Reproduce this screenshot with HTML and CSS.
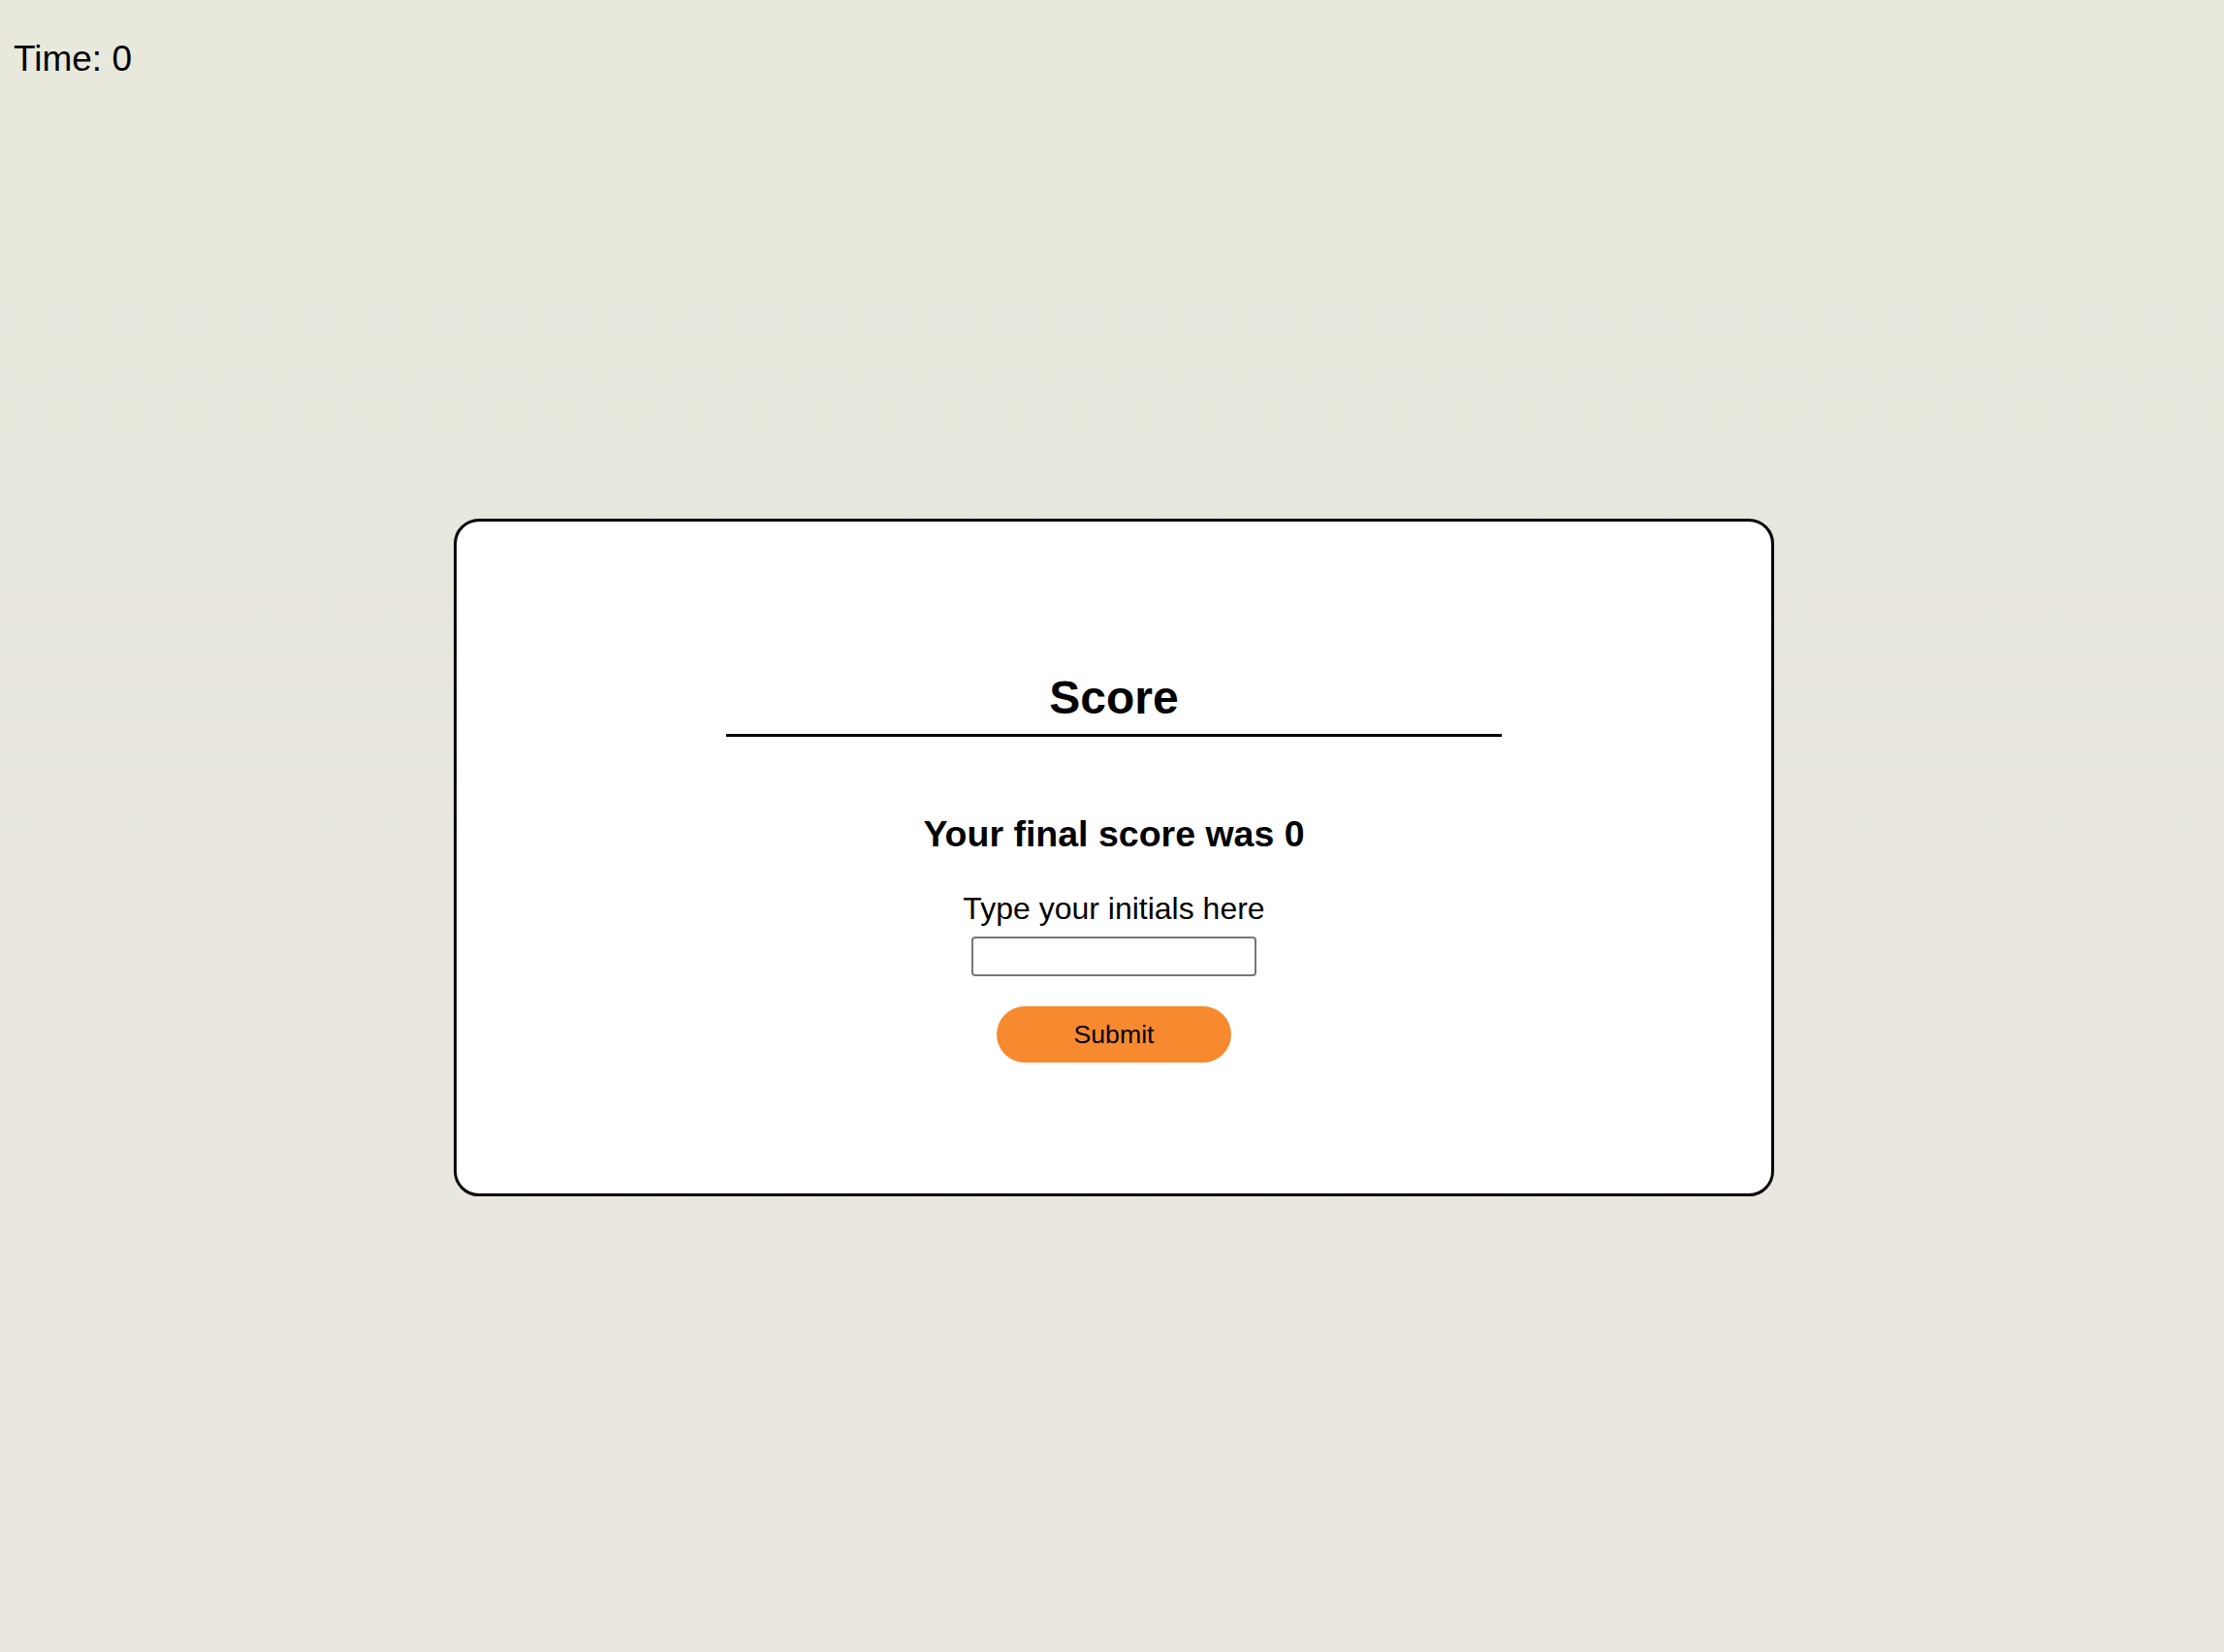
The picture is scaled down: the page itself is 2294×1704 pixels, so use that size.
FILE: index.html
```html
<!DOCTYPE html>
<html lang="en">
<head>
<meta charset="utf-8">
<title>Quiz - Score</title>
<link rel="stylesheet" href="styles.css">
</head>
<body>
<header class="topbar">
  <div class="timer">Time: 0</div>
</header>
<main class="stage">
  <section class="card">
    <h1 class="card-title">Score</h1>
    <p class="final">Your final score was 0</p>
    <label class="initials-label" for="initials">Type your initials here</label>
    <input class="initials-input" id="initials" type="text">
    <button class="submit-btn" type="button">Submit</button>
  </section>
</main>
</body>
</html>
```
FILE: styles.css
```css
html, body {
  margin: 0;
  padding: 0;
}

body {
  min-height: 1704px;
  background: linear-gradient(to bottom, #e8e8dc 0%, #e9e7df 60%, #eae7e1 100%);
  font-family: "Liberation Sans", Arial, Helvetica, sans-serif;
  color: #000;
}

.topbar {
  padding: 40px 0 0 14px;
}

.timer {
  font-size: 37px;
  line-height: 42px;
}

.stage {
  display: flex;
  justify-content: center;
  padding: 453px 0 0 4px;
}

.card {
  box-sizing: border-box;
  width: 1362px;
  height: 699px;
  background: #fff;
  border: 3px solid #000;
  border-radius: 26px;
  display: flex;
  flex-direction: column;
  align-items: center;
  padding-top: 154px;
}

.card-title {
  width: 800px;
  margin: 0;
  padding-bottom: 10px;
  border-bottom: 3px solid #000;
  text-align: center;
  font-size: 48px;
  line-height: 55px;
  font-weight: 700;
}

.final {
  margin: 79px 0 0;
  font-size: 37.5px;
  line-height: 42px;
  font-weight: 700;
}

.initials-label {
  margin-top: 38px;
  font-size: 32px;
  line-height: 37px;
}

.initials-input {
  box-sizing: border-box;
  margin-top: 10px;
  width: 294px;
  height: 41px;
  border: 2px solid #767676;
  border-radius: 4px;
  background: #fff;
  font-family: inherit;
  font-size: 26px;
  padding: 0 4px;
}

.submit-btn {
  box-sizing: border-box;
  margin-top: 31px;
  width: 242px;
  height: 58px;
  border: none;
  border-radius: 29px;
  background: #f7892f;
  color: #000;
  font-family: "Liberation Sans", Arial, Helvetica, sans-serif;
  font-size: 26.67px;
  padding: 0;
  cursor: pointer;
}
```
